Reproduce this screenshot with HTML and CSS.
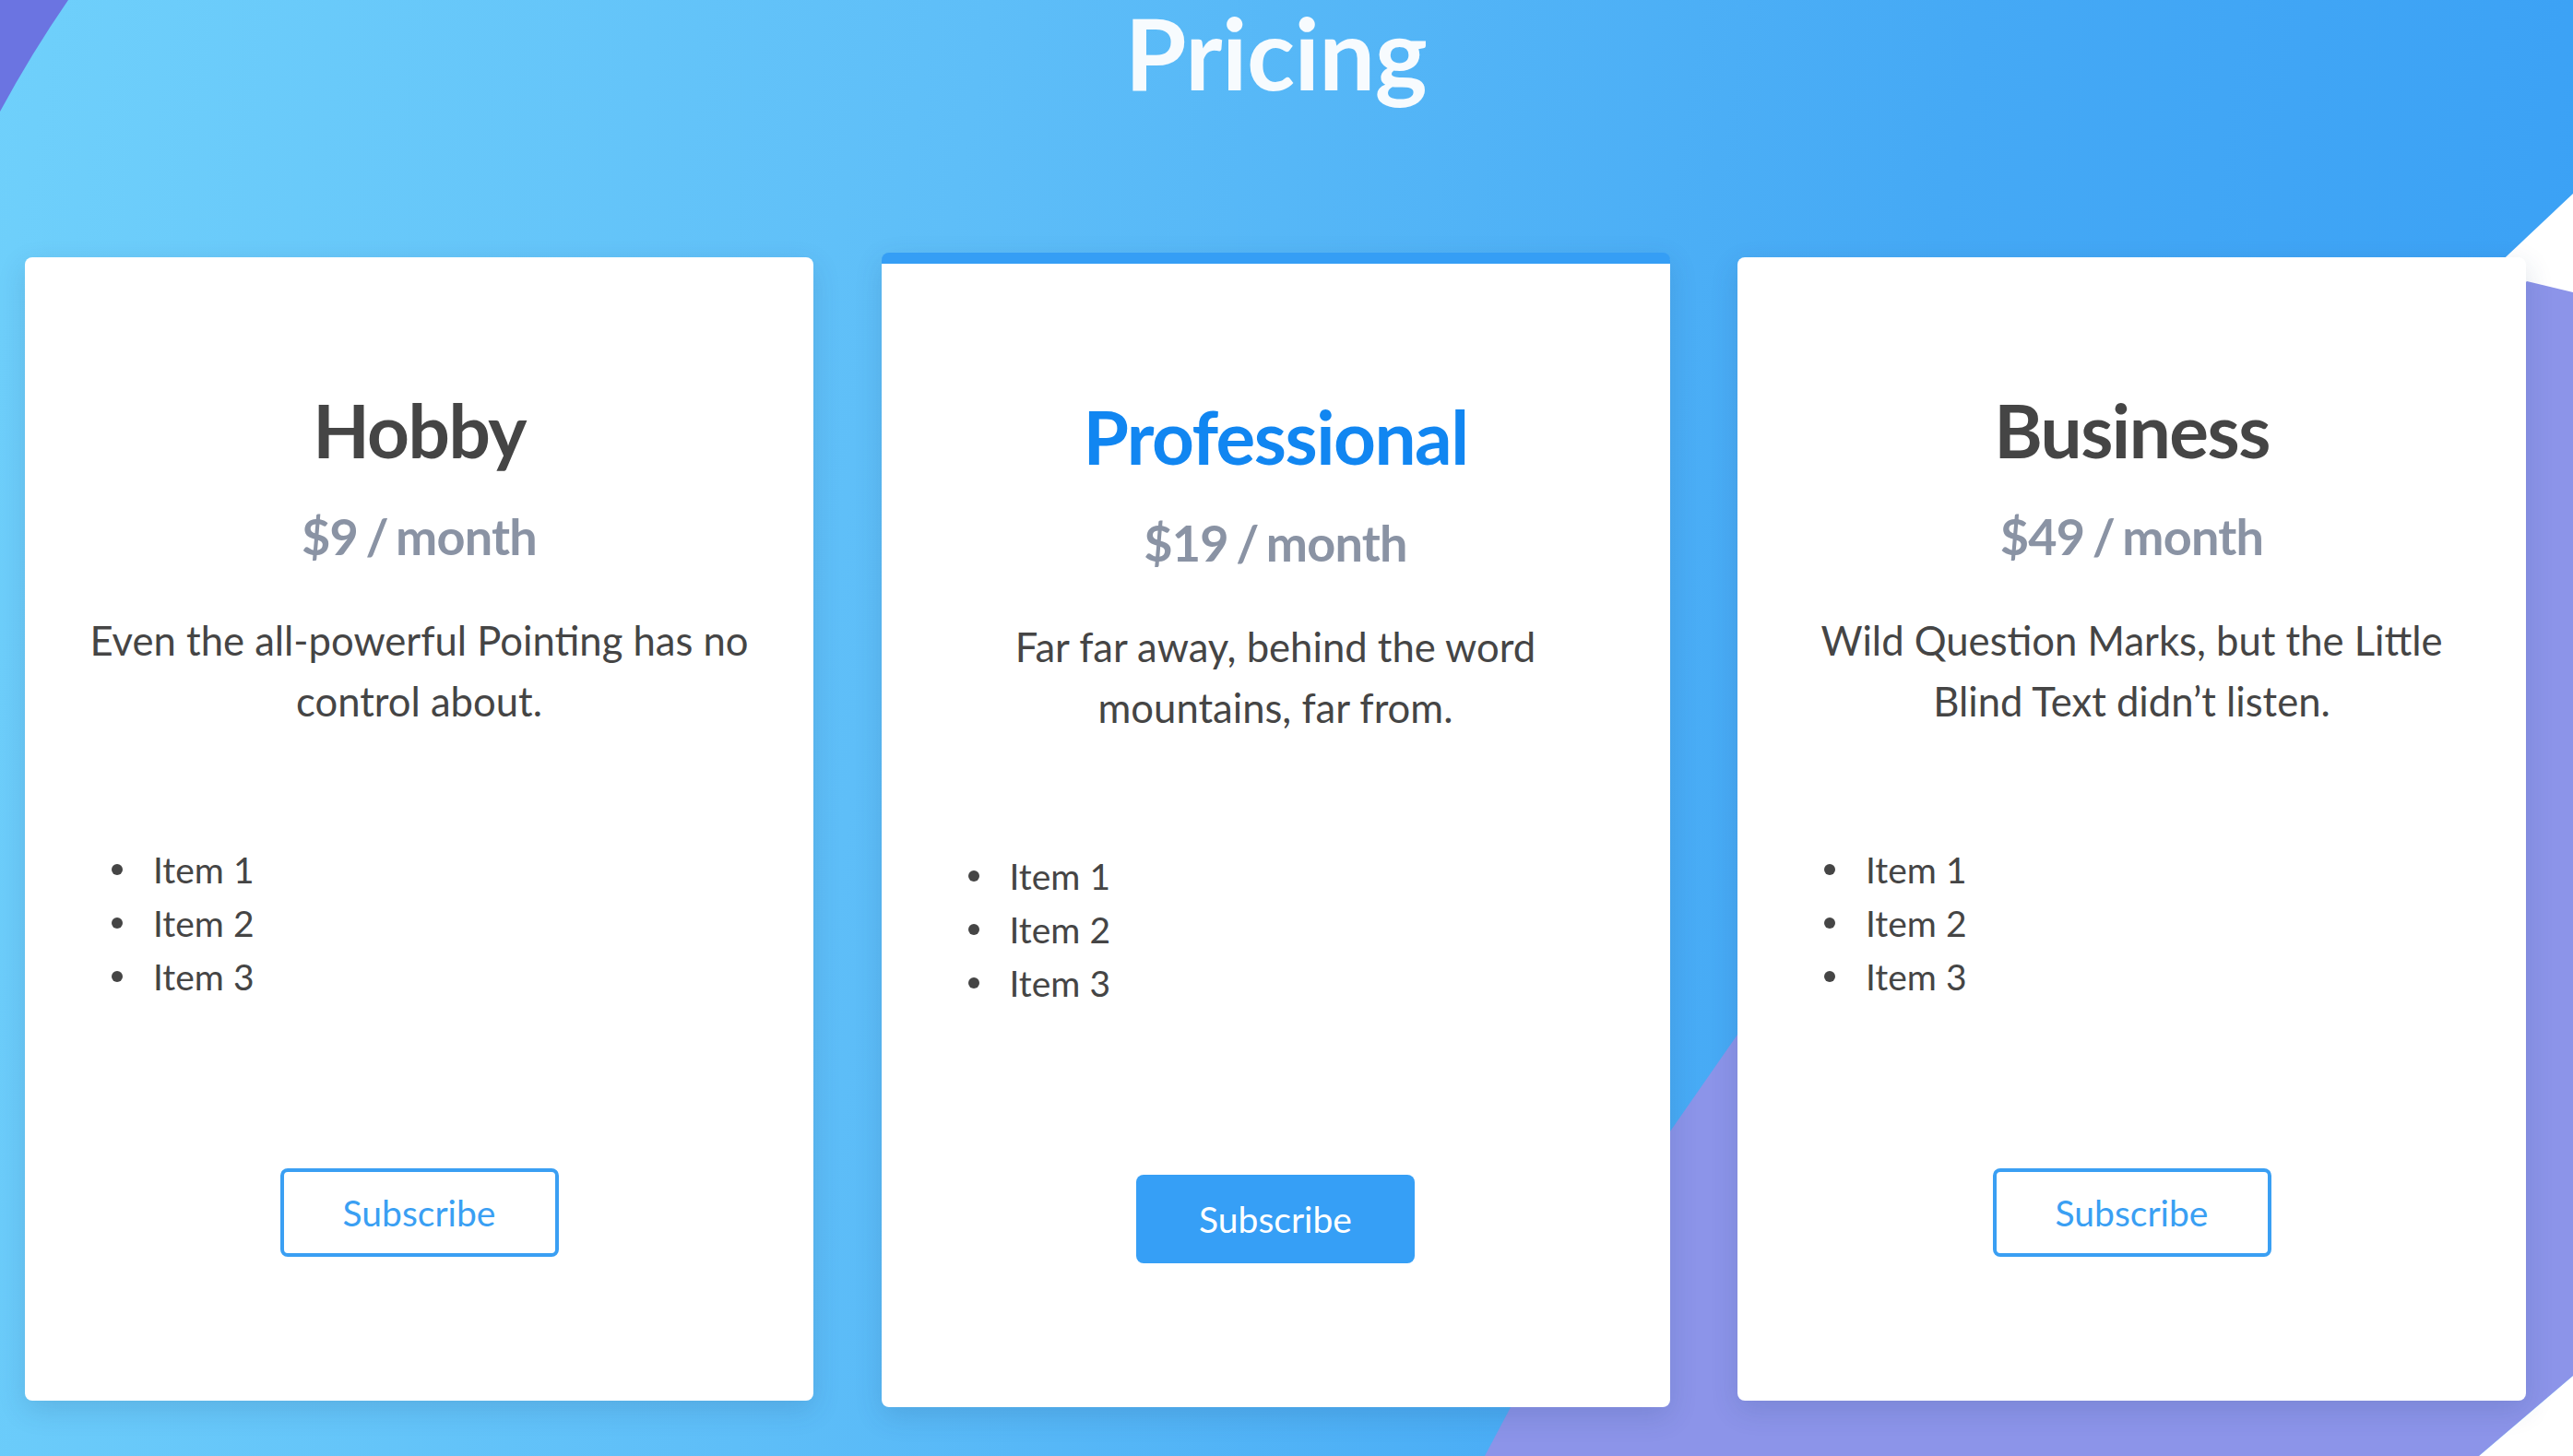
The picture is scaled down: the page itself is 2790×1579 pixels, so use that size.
FILE: index.html
```html
<!DOCTYPE html>
<html lang="en">
<head>
<meta charset="utf-8">
<title>Pricing</title>
<link rel="stylesheet" href="styles.css">
</head>
<body>
<svg class="bg" width="2790" height="1579" viewBox="0 0 2790 1579" aria-hidden="true">
  <path class="bg-purple-dark" d="M0,0 L74,0 Q34,58 0,121 Z"/>
  <path class="bg-white" d="M2790,210 L2300,672 L2790,672 Z"/>
  <path class="bg-purple" d="M1610,1579 L1637,1528 L1811,1227 L1884,1122 L2740,305 L2790,317 L2790,1492 L2688,1579 Z"/>
  <path class="bg-white" d="M2790,1492 L2790,1579 L2688,1579 Z"/>
</svg>
<main class="page">
  <h1 class="title">Pricing</h1>
  <section class="plans">
    <article class="card">
      <h3 class="plan-name">Hobby</h3>
      <p class="price">$9 / month</p>
      <p class="desc">Even the all-powerful Pointing has no control about.</p>
      <ul class="items">
        <li>Item 1</li>
        <li>Item 2</li>
        <li>Item 3</li>
      </ul>
      <button class="btn btn-outline">Subscribe</button>
    </article>
    <article class="card card-featured">
      <h3 class="plan-name plan-name-featured">Professional</h3>
      <p class="price">$19 / month</p>
      <p class="desc">Far far away, behind the word mountains, far from.</p>
      <ul class="items">
        <li>Item 1</li>
        <li>Item 2</li>
        <li>Item 3</li>
      </ul>
      <button class="btn btn-filled">Subscribe</button>
    </article>
    <article class="card">
      <h3 class="plan-name">Business</h3>
      <p class="price">$49 / month</p>
      <p class="desc">Wild Question Marks, but the Little Blind Text didn’t listen.</p>
      <ul class="items">
        <li>Item 1</li>
        <li>Item 2</li>
        <li>Item 3</li>
      </ul>
      <button class="btn btn-outline">Subscribe</button>
    </article>
  </section>
</main>
</body>
</html>
```
FILE: styles.css
```css
html, body {
  margin: 0;
  padding: 0;
}
body {
  width: 2790px;
  height: 1579px;
  overflow: hidden;
  position: relative;
  font-family: Lato, "Open Sans", "Liberation Sans", sans-serif;
  background: linear-gradient(100deg, #6fd0fb 0%, #5ebef8 35%, #45a9f5 70%, #389ff5 100%);
}
.bg {
  position: absolute;
  left: 0;
  top: 0;
  z-index: 0;
}
.bg-purple-dark { fill: #6b74e1; }
.bg-purple { fill: #8c94e9; }
.bg-white { fill: #ffffff; }

.page {
  position: relative;
  z-index: 1;
  padding: 0 50px 0 27px;
  display: flex;
  flex-direction: column;
  align-items: stretch;
}
.title {
  margin: 0;
  padding-top: 2px;
  text-align: center;
  color: #f7fbfe;
  font-size: 108px;
  line-height: 1;
  font-weight: 700;
  height: 110px;
  letter-spacing: -0.5px;
}
.plans {
  margin-top: 167px;
  display: grid;
  grid-template-columns: repeat(3, 855px);
  column-gap: 73.5px;
  align-items: start;
}
.card {
  background: #fff;
  border-radius: 8px;
  box-shadow: 0 10px 30px rgba(30, 60, 110, 0.16);
  padding: 139px 60px 156px;
  display: flex;
  flex-direction: column;
  align-items: center;
  text-align: center;
}
.card-featured {
  margin-top: -5px;
  border-top: 12px solid #359ef5;
}
.plan-name {
  margin: 0;
  font-size: 80px;
  line-height: 96px;
  font-weight: 700;
  letter-spacing: -1.5px;
  color: #454545;
}
.plan-name-featured {
  color: #1186f1;
}
.price {
  margin: 36px 0 0;
  font-size: 54px;
  line-height: 64px;
  font-weight: 700;
  letter-spacing: -0.8px;
  word-spacing: -4px;
  color: #8a93a4;
}
.desc {
  margin: 47px 0 0;
  font-size: 43.6px;
  line-height: 66px;
  color: #454545;
  max-width: 734px;
}
.items {
  align-self: stretch;
  text-align: left;
  list-style: none;
  margin: 121px 0 0;
  padding-left: 79px;
  font-size: 39px;
  line-height: 58px;
  color: #454545;
}
.items li {
  display: flex;
  align-items: center;
}
.items li::before {
  content: "";
  flex: none;
  width: 12px;
  height: 12px;
  border-radius: 50%;
  background: #454545;
  margin-left: -45px;
  margin-right: 33px;
}
.btn {
  margin-top: 179px;
  width: 302px;
  height: 96px;
  border-radius: 8px;
  font-family: Lato, "Open Sans", "Liberation Sans", sans-serif;
  font-size: 39px;
  cursor: pointer;
  box-sizing: border-box;
}
.btn-outline {
  background: #fff;
  border: 4px solid #3a9ff3;
  color: #3a9ff3;
}
.btn-filled {
  background: #369ff6;
  border: 0;
  color: #fff;
}
```
